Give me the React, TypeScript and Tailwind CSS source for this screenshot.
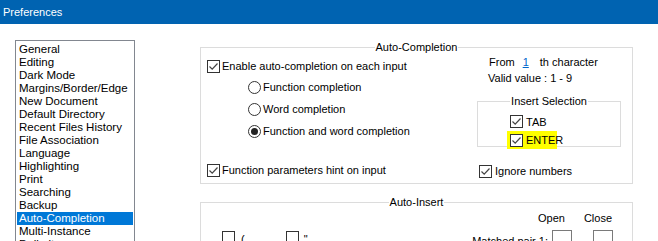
import type { ReactNode } from 'react'

const pages = [
  'General',
  'Editing',
  'Dark Mode',
  'Margins/Border/Edge',
  'New Document',
  'Default Directory',
  'Recent Files History',
  'File Association',
  'Language',
  'Highlighting',
  'Print',
  'Searching',
  'Backup',
  'Auto-Completion',
  'Multi-Instance',
  'Delimiter',
]

function Check({ checked = false }: { checked?: boolean }) {
  return (
    <span className="flex h-[13px] w-[13px] shrink-0 items-center justify-center border border-[#333] bg-white">
      {checked && (
        <svg width="11" height="11" viewBox="0 0 11 11">
          <path d="M1.5 5.5 L4.2 8.2 L9.5 2.5" fill="none" stroke="#444" strokeWidth="1.2" />
        </svg>
      )}
    </span>
  )
}

function Radio({ checked = false }: { checked?: boolean }) {
  return (
    <span className="flex h-[13px] w-[13px] shrink-0 items-center justify-center rounded-full border border-[#333] bg-white">
      {checked && <span className="h-[7px] w-[7px] rounded-full bg-[#222]" />}
    </span>
  )
}

function Group({ title, className, children }: { title: string; className?: string; children: ReactNode }) {
  return (
    <fieldset className={`border border-[#dcdcdc] ${className ?? ''}`}>
      <legend className="mx-auto px-[1px] leading-[16px]">{title}</legend>
      {children}
    </fieldset>
  )
}

export default function App() {
  return (
    <div
      className="h-[241px] w-[658px] overflow-hidden bg-white text-[11px] leading-[16px] text-black"
      style={{ fontFamily: '"Liberation Sans", Arial, sans-serif' }}
    >
      <div className="flex h-[24px] items-center bg-[#0063b1] pl-[3px] text-[11px] text-white">Preferences</div>

      <div className="flex pt-[16px]">
        <div className="ml-[15px] h-[220px] w-[120px] shrink-0 border border-[#828790] px-[1px] pt-[2px]">
          {pages.map((p) => (
            <div
              key={p}
              className={`h-[13px] pl-[2px] text-[11.5px] leading-[13px] ${p === 'Auto-Completion' ? 'bg-[#0078d7] text-white' : ''}`}
            >
              {p}
            </div>
          ))}
        </div>

        <div className="ml-[65px] w-[433px]">
          <Group title="Auto-Completion" className="mt-[-1px] h-[145px]">
            <div className="flex">
              <div className="pl-[6px]">
                <label className="mt-[3px] flex h-[16px] items-center gap-[2px]">
                  <Check checked />
                  Enable auto-completion on each input
                </label>
                <div className="mt-[5px] flex flex-col gap-[6px] pl-[41px]">
                  <label className="flex h-[16px] items-center gap-[2px]">
                    <Radio />
                    Function completion
                  </label>
                  <label className="flex h-[16px] items-center gap-[2px]">
                    <Radio />
                    Word completion
                  </label>
                  <label className="flex h-[16px] items-center gap-[2px]">
                    <Radio checked />
                    Function and word completion
                  </label>
                </div>
                <label className="mt-[23px] flex h-[16px] items-center gap-[2px]">
                  <Check checked />
                  Function parameters hint on input
                </label>
              </div>

              <div className="ml-auto mr-[11px] w-[144px]">
                <div className="mt-[-1px] flex h-[16px] items-center pl-[12px]">
                  <span>From</span>
                  <span className="ml-[8px] text-[#0066cc] underline">1</span>
                  <span className="ml-[11px]">th character</span>
                </div>
                <div className="h-[16px] pl-[11px]">Valid value : 1 - 9</div>
                <Group title="Insert Selection" className="mt-[7px] h-[54px]">
                  <div className="flex flex-col pl-[32px] pt-[5px]">
                    <label className="flex h-[15px] items-center gap-[3px]">
                      <Check checked />
                      TAB
                    </label>
                    <label className="mt-[2px] ml-[-3px] flex h-[18px] w-[50px] items-center gap-[3px] bg-[#ffff00] pl-[3px]">
                      <Check checked />
                      ENTER
                    </label>
                  </div>
                </Group>
                <label className="mt-[16px] flex h-[16px] items-center gap-[3px] pl-[2px]">
                  <Check checked />
                  Ignore numbers
                </label>
              </div>
            </div>
          </Group>

          <Group title="Auto-Insert" className="mt-[10px] h-[60px]">
            <div className="flex">
              <div className="flex items-start pl-[21px] pt-[21px]">
                <Check />
                <span className="ml-[6px]">(</span>
                <span className="ml-[41px]">
                  <Check />
                </span>
                <span className="ml-[5px]">"</span>
              </div>
              <div className="ml-auto mr-[19px]">
                <div className="flex h-[16px] justify-end gap-[19px] pr-[1px]">
                  <span>Open</span>
                  <span>Close</span>
                </div>
                <div className="mt-[4px] flex items-start">
                  <span className="mt-[3px]">Matched pair 1:</span>
                  <span className="ml-[4px] h-[20px] w-[20px] border border-[#7a7a7a]" />
                  <span className="ml-[21px] h-[20px] w-[20px] border border-[#7a7a7a]" />
                </div>
              </div>
            </div>
          </Group>
        </div>
      </div>
    </div>
  )
}
